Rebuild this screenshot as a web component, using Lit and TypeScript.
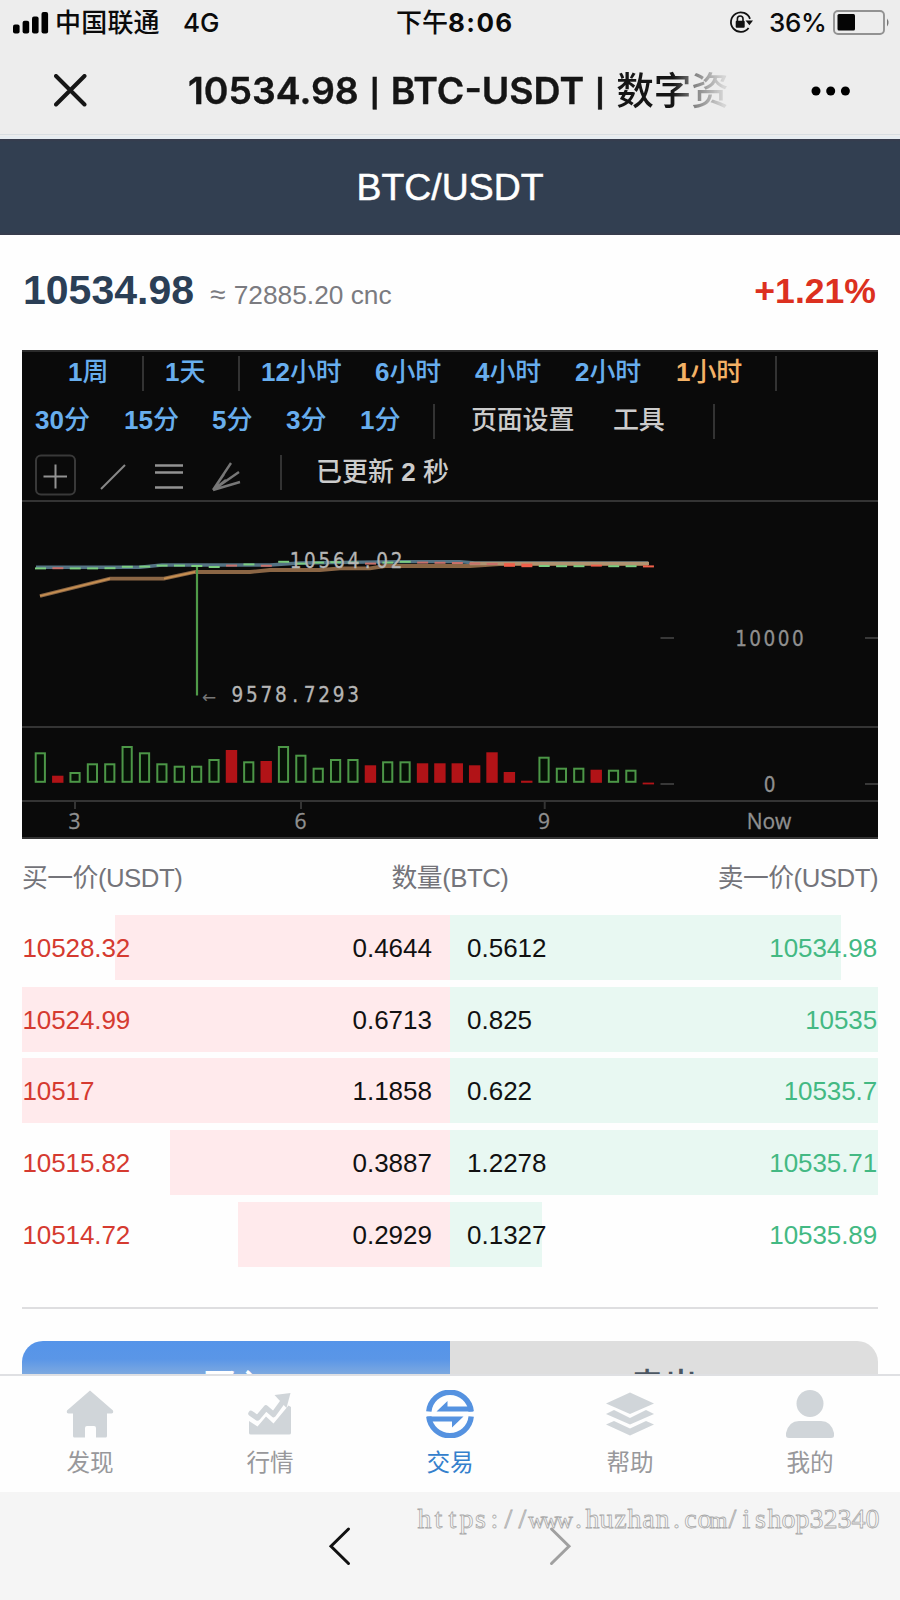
import { LitElement, html, svg, css } from "lit";
import { customElement } from "lit/decorators.js";

const PITCH = 17.37;

// [colour, top edge] of every volume bar; all share one baseline
const VOLUMES: Array<[string, number]> = [
  ["g", 752.3], ["r", 775.7], ["g", 772], ["g", 763.3], ["g", 763.3], ["g", 746], ["g", 752.3], ["g", 763.3],
  ["g", 765.7], ["g", 765.7], ["g", 759], ["r", 750], ["g", 761.3], ["r", 761], ["g", 746], ["g", 754.7],
  ["g", 767.7], ["g", 759], ["g", 759], ["r", 765.3], ["g", 761.3], ["g", 761.3], ["r", 763.3], ["r", 763.3],
  ["r", 763.3], ["r", 765.3], ["r", 752.3], ["r", 772], ["r", 780.7], ["g", 756.7], ["g", 767.7], ["g", 767.7],
  ["r", 769.7], ["g", 769.7], ["g", 769.7], ["r", 782.6],
];

// vertical position of each candle body
const CANDLES = [
  568.4, 568.2, 568.4, 568.4, 568.2, 566.8, 566.6, 565.6, 565.6, 566, 567, 565.6, 564.4, 565.8, 561.8, 563.6,
  562.6, 562.2, 562.6, 563.6, 562.6, 561.8, 562.6, 562.8, 563, 563.6, 564, 565, 565.4, 566, 566.2, 566.2,
  565.6, 566.2, 566.2, 566.4,
];

const BIDS = [
  { price: "10528.32", amount: "0.4644", width: 335 },
  { price: "10524.99", amount: "0.6713", width: 428 },
  { price: "10517", amount: "1.1858", width: 428 },
  { price: "10515.82", amount: "0.3887", width: 280 },
  { price: "10514.72", amount: "0.2929", width: 212 },
];

const ASKS = [
  { price: "10534.98", amount: "0.5612", width: 391 },
  { price: "10535", amount: "0.825", width: 428 },
  { price: "10535.7", amount: "0.622", width: 428 },
  { price: "10535.71", amount: "1.2278", width: 428 },
  { price: "10535.89", amount: "0.1327", width: 92 },
];

const spread = (text: string, start: number, pitch: number) =>
  [...text].map((_, i) => (start + i * pitch).toFixed(1)).join(" ");

@customElement("status-bar")
class StatusBar extends LitElement {
  static styles = css`
    :host { display: grid; grid-template-columns: 13px 42px 128px 213px 332px 41px 64px 1fr; height: 46px; align-items: center; color: #0b0b0b;
      font: 700 26px/46px Inter, "Noto Sans CJK SC", sans-serif; white-space: nowrap; }
    .cn { font-weight: 500; letter-spacing: 0.2px; }
    .net { font-weight: 500; font-size: 26px; }
    .time { letter-spacing: 1.4px; }
    .ampm { font-weight: 500; letter-spacing: 0; }
    .pct { font-weight: 500; letter-spacing: -0.3px; }
    svg { display: block; overflow: visible; }
  `;
  render() {
    return html`
      <span></span>
      <svg width="35" height="22" viewBox="0 0 35 22">
        <rect x="0" y="12.5" width="6.6" height="9" rx="2"/><rect x="9.6" y="8.8" width="6.6" height="12.7" rx="2"/>
        <rect x="19" y="4.6" width="6.6" height="16.9" rx="2"/><rect x="28.5" y="0" width="6.6" height="21.5" rx="2"/>
      </svg>
      <span class="cn">中国联通</span>
      <span class="net">4G</span>
      <span class="time"><span class="ampm">下午</span>8:06</span>
      <svg width="26" height="24" viewBox="0 0 26 24">
        <path d="M20.3 17.6A9.8 9.8 0 1 1 21.700 8.500" transform="translate(0.300 -0.600)" fill="none" stroke="#111" stroke-width="1.8"/>
        <path d="M17.500 9.500h7.500l-3.600 4.800z" fill="#111"/>
        <rect x="7.700" y="9.800" width="9" height="7" rx="1" fill="#111"/>
        <path d="M9.400 10.200V7.800a2.800 2.800 0 0 1 5.600 0V10.200" fill="none" stroke="#111" stroke-width="1.6"/>
      </svg>
      <span class="pct">36%</span>
      <svg width="58" height="24" viewBox="0 0 58 24">
        <rect x="1" y="0" width="50" height="23" rx="4" fill="none" stroke="#929292" stroke-width="1.9"/>
        <rect x="4.500" y="3" width="17.5" height="16.500" rx="1.5" fill="#050505"/>
        <path d="M54 7.500q3 4 0 8z" fill="#777"/>
      </svg>`;
  }
}

@customElement("title-bar")
class TitleBar extends LitElement {
  static styles = css`
    :host { display: grid; grid-template-columns: 54px 134px 548px 75px 1fr; height: 89px; align-items: center;
      box-sizing: border-box; border-bottom: 1px solid #d9dee2; }
    svg { display: block; }
    .x { grid-column: 2; }
    .title { font: 600 37.400px/90px Inter, "Noto Sans CJK SC", sans-serif; color: #151515; white-space: nowrap;
      height: 88px; letter-spacing: 0; -webkit-text-stroke: 0.4px #151515;
      -webkit-mask-image: linear-gradient(90deg, #000 485px, rgba(0,0,0,.5) 506px, rgba(0,0,0,.1) 536px); }
    .bar { display: inline-block; width: 32px; text-align: center; font-size: 27px; line-height: 40px; font-weight: 700; vertical-align: 1px; letter-spacing: 0; }
    .cjk { font-weight: 500; font-size: 37.600px; -webkit-text-stroke: 0; }
    .dots { grid-column: 5; margin-top: 2px; }
  `;
  render() {
    return html`
      <svg class="x" width="33" height="33" viewBox="0 0 33 33"><path d="M2 2L30.5 30.5M30.5 2L2 30.5" stroke="#161616" stroke-width="4" stroke-linecap="round"/></svg>
      <div class="title">10534.98<span class="bar">|</span>BTC-USDT<span class="bar">|</span><span class="cjk">数字资</span></div>
      <svg class="dots" width="40" height="10" viewBox="0 0 40 10"><circle cx="5" cy="5" r="4.5"/><circle cx="19.7" cy="5" r="4.5"/><circle cx="34.4" cy="5" r="4.5"/></svg>`;
  }
}

@customElement("chart-toolbar")
class ChartToolbar extends LitElement {
  static styles = css`
    :host { display: block; height: 152px; border-top: 2px solid #2b2b2b; box-sizing: border-box; border-bottom: 2px solid #343434;
      font: bold 26px/36px "Liberation Sans", "Noto Sans CJK SC", sans-serif; color: #68aeee; }
    .row { display: grid; height: 36px; white-space: nowrap; align-items: center; }
    .row span { position: relative; top: -1px; }
    .row span span { top: 0; }
    .r1 { padding: 3px 0 0 46px; grid-template-columns: 74px 23px 73px 23px 114px 100px 100px 101px 99px 2px; }
    .r2 { padding: 12px 0 0 13px; grid-template-columns: 89px 88px 74px 74px 73px 38px 142px 100px 2px; }
    .r3 { padding: 15px 0 0 13px; grid-template-columns: 64px 55px 57px 69px 36px 1fr; height: 45px; align-items: start; }
    .sep { width: 2px; height: 35px; background: #333; }
    .r3 .sep { margin-top: 1px; }
    .r3 .plain { top: 0; }
    .cur { color: #f4b266; }
    .plain { color: #ccc; }
    .cjk, .plain { font-weight: 500; }
    .n { font-weight: 700; }
    .row .cjk { letter-spacing: -0.2px; }
    svg { display: block; overflow: visible; }
  `;
  render() {
    const item = (n: string, unit: string, cls = "") => html`<span class=${cls}>${n}<span class="cjk">${unit}</span></span>`;
    return html`
      <div class="row r1">${item("1", "周")}<i class="sep"></i>${item("1", "天")}<i class="sep"></i>${item("12", "小时")}${item("6", "小时")}${item("4", "小时")}${item("2", "小时")}${item("1", "小时", "cur")}<i class="sep"></i></div>
      <div class="row r2">${item("30", "分")}${item("15", "分")}${item("5", "分")}${item("3", "分")}${item("1", "分")}<i class="sep"></i><span class="plain cjk">页面设置</span><span class="plain cjk">工具</span><i class="sep"></i></div>
      <div class="row r3">
        <svg width="41" height="42" viewBox="0 0 41 41" fill="none"><rect x="1" y="1" width="39" height="39" rx="5" stroke="#393939" stroke-width="2"/><path d="M8.5 22H32M20.5 10V34" stroke="#929292" stroke-width="2"/></svg>
        <svg width="28" height="43" viewBox="0 0 28 41"><path d="M2 34L26 10" stroke="#888" stroke-width="2"/></svg>
        <svg width="30" height="43" viewBox="0 0 30 41"><path d="M1 10.500H29M1 17.500H29M1 32.500H29" stroke="#929292" stroke-width="2.4"/></svg>
        <svg width="30" height="43" viewBox="0 0 30 41"><path d="M2 35L20 8M2 35L28 17M2 35L29 27M2 35L13 19M2 35L15 25" stroke="#777" stroke-width="2.4"/></svg>
        <i class="sep"></i><span class="plain">已更新 <b class="n">2</b> 秒</span>
      </div>`;
  }
}

@customElement("price-chart")
class PriceChart extends LitElement {
  static styles = css`
    :host { display: block; height: 337px; }
    svg { display: block; }
    .num { font: 20.5px "DejaVu Sans", sans-serif; font-stretch: condensed; fill: #b5b5b5; text-anchor: middle; stroke: #b5b5b5; stroke-width: 0.3; }
    .axis { font: 21px "Open Sans", sans-serif; fill: #909090; text-anchor: middle; stroke: #909090; stroke-width: 0.3; }
    .dim { fill: #8f8f8f; stroke: #8f8f8f; }
    .arrow { font: 17px "DejaVu Sans", sans-serif; fill: #777; }
  `;
  render() {
    return html`<svg width="856" height="337" viewBox="22 502 856 337">
      <g stroke="#343434" stroke-width="2"><path d="M22 727H878M22 801H878M22 838H878M75 802V809M301 802V809M544.7 802V809"/></g>
      <path d="M660.5 638H674M865 638H878M660.5 784H674M865 784H878" stroke="#484848" stroke-width="1.6"/>
      <path d="M36 567.3H140L162 565H270L300 563L400 561.6H460L475 563H648" fill="none" stroke="#547384" stroke-width="3.4"/>
      <path d="M40 596L110 578.6H164L195 572H250L270 570H320L340 568.3H370L385 566H470L500 564H648" fill="none" stroke="#8b6645" stroke-width="3.8"/>
      <path d="M470 563.500H649" stroke="#b09472" stroke-width="3.6"/>
      <path d="M40 596L110 578.6M164 578.6L195 572" stroke="#c78f50" stroke-width="1.8"/>
      <path d="M197 566V695.5" stroke="#4f9a48" stroke-width="2.2"/>
      ${CANDLES.map((y, i) => svg`<path d="M${35 + i * PITCH} ${y}h11" stroke=${VOLUMES[i][0] === "g" ? "#7bcd80" : i > 26 ? "#f0604a" : "#c8706a"} stroke-width=${i === 27 || i === 28 ? 3.6 : 2}/>`)}
      ${VOLUMES.map(([c, top], i) => {
        const x = 34.7 + i * PITCH;
        const h = Math.max(782.8 - top, 1.8);
        return c === "g"
          ? svg`<rect x=${x + 1} y=${top + 1} width="9.2" height=${h - 2} fill="#061006" stroke="#4c9747" stroke-width="2"/>`
          : svg`<rect x=${x} y=${top} width="11.4" height=${h} fill="#b11317"/>`;
      })}
      <text class="num" x=${spread("10564.02", 295.500, 14.45)} y="567.500">10564.02</text>
      <text class="arrow" x="202" y="703">←</text>
      <text class="num" x=${spread("9578.7293", 237.400, 14.45)} y="702.300">9578.7293</text>
      <text class="num dim" x=${spread("10000", 741, 14.2)} y="645.600">10000</text>
      <text class="num dim" x="769.500" y="791.500">0</text>
      <text class="axis" x="74.500" y="829">3</text><text class="axis" x="300.500" y="829">6</text><text class="axis" x="544" y="829">9</text>
      <text class="axis" x="769" y="829">Now</text>
    </svg>`;
  }
}

@customElement("order-book")
class OrderBook extends LitElement {
  static styles = css`
    :host { display: block; font: 26px/66px "Liberation Sans", "Noto Sans CJK SC", sans-serif; }
    .head { display: grid; grid-template-columns: 1fr auto 1fr; height: 76px; line-height: 79px; color: #74747a; font-size: 25.800px; letter-spacing: -0.5px; }
    .r { text-align: right; }
    .rows { display: grid; grid-template-columns: 428px 428px; row-gap: 6.7px; grid-auto-rows: 65px; }
    .cell { display: grid; grid-template: 65px / 100%; }
    .bar { grid-area: 1 / 1; }
    .bid .bar { background: #ffeaec; justify-self: end; }
    .ask .bar { background: #e8f8f2; }
    .txt { grid-area: 1 / 1; display: flex; justify-content: space-between; }
    .bid .txt { padding: 0 18px 0 0.500px; }
    .ask .txt { padding: 0 1px 0 17px; }
    .price { letter-spacing: -0.1px; }
    .bid .price { color: #d53a30; }
    .ask .price { color: #43b983; }
    .amt { color: #111; }
  `;
  render() {
    return html`
      <div class="head"><span>买一价(USDT)</span><span>数量(BTC)</span><span class="r">卖一价(USDT)</span></div>
      <div class="rows">${BIDS.map((b, i) => html`
        <div class="cell bid"><div class="bar" style="width:${b.width}px"></div><div class="txt"><span class="price">${b.price}</span><span class="amt">${b.amount}</span></div></div>
        <div class="cell ask"><div class="bar" style="width:${ASKS[i].width}px"></div><div class="txt"><span class="amt">${ASKS[i].amount}</span><span class="price">${ASKS[i].price}</span></div></div>`)}
      </div>`;
  }
}

@customElement("tab-bar")
class TabBar extends LitElement {
  static styles = css`
    :host { display: grid; grid-template-columns: repeat(5, 180px); height: 118px; background: #fefefe; border-top: 2px solid #dfe0e3;
      box-sizing: border-box; color: #98989b; font: 23.6px/30px "Noto Sans CJK SC", sans-serif; }
    .tab { display: flex; flex-direction: column; align-items: center; padding-top: 14px; gap: 8px; }
    .on { color: #3480cc; }
    svg { display: block; fill: #d0d5d9; }
    .on svg { fill: #5592e0; }
  `;
  render() {
    return html`
      <div class="tab"><svg width="48" height="48" viewBox="0 0 48 48"><path d="M24 0.5L47 20.5Q48 24 44.5 23.5H41V46Q41 47.5 39.5 47.5H30V38Q30 36 28 36H21Q19 36 19 38V47.5H8.500Q7 47.5 7 46V23.500H3.500Q0 24 1 20.500Z"/></svg><span>发现</span></div>
      <div class="tab"><svg width="48" height="48" viewBox="0 0 48 48"><path d="M5 23.500L11.500 28L20 18L27.500 24.500L38 10" fill="none" stroke="#d0d5d9" stroke-width="5.500" stroke-linejoin="round" stroke-linecap="round"/><path d="M28.500 5L44.500 3L40.500 18Z"/><path d="M3 31L11.500 36.500L20 26.500L27.500 33.500L42.500 15.500L45 17V43Q45 44.500 43 44.500H5Q3 44.500 3 43Z"/></svg><span>行情</span></div>
      <div class="tab on"><svg width="48" height="48" viewBox="0 0 48 48"><path d="M2.800 21.500A21.300 21.300 0 0 1 45.200 21.500M2.800 26.500A21.300 21.300 0 0 0 45.200 26.500" fill="none" stroke="#5592e0" stroke-width="5.400"/><path d="M10.500 21.500L21.500 11V16.500H45L47 21.500ZM37.500 26.500L26 37.500V31.500H3L1 26.500Z"/></svg><span>交易</span></div>
      <div class="tab"><svg width="48" height="48" viewBox="0 0 48 48"><path d="M24 2.500L48 13.500L24 24L0 13.500Z"/><path d="M0 24L8 20L24 28L40 20L48 24L24 34.500Z"/><path d="M0 34.500L8 31L24 38.500L40 31L48 34.500L24 45.500Z"/></svg><span>帮助</span></div>
      <div class="tab"><svg width="48" height="48" viewBox="0 0 48 48"><circle cx="24" cy="13.500" r="13.500"/><path d="M0 43Q3 31 13 31H35Q45 31 48 43V45.500Q48 48 45 48H3Q0 48 0 45.500Z"/></svg><span>我的</span></div>`;
  }
}

@customElement("browser-footer")
class BrowserFooter extends LitElement {
  static styles = css`
    :host { display: block; height: 108px; background: #f5f5f5; }
    svg { display: block; }
    .mark { font: 28px "Liberation Serif", serif; fill: #f8f8f8; stroke: #aaa; stroke-width: 0.8; text-anchor: middle; }
    .wide { font-size: 23px; }
  `;
  render() {
    const url = "https://www.huzhan.com/ishop32340";
    const parts: Array<[string, boolean]> = [["https://", false], ["www", true], [".huzhan.co", false], ["m", true], ["/ishop32340", false]];
    return html`<svg width="900" height="108" viewBox="0 1492 900 108">
      <path d="M348.500 1529L331 1546.300L348.500 1563.500" fill="none" stroke="#111" stroke-width="3" stroke-linecap="round"/>
      <path d="M551.500 1529L569 1546.300L551.500 1563.500" fill="none" stroke="#a0a0a0" stroke-width="3" stroke-linecap="round"/>
      <text class="mark" x=${spread(url, 424.5, 14)} y="1527.500">${parts.map(([t, wide]) => svg`<tspan class=${wide ? "wide" : ""}>${t}</tspan>`)}</text>
    </svg>`;
  }
}

@customElement("app-root")
class AppRoot extends LitElement {
  static styles = css`
    :host { display: block; width: 900px; height: 1600px; overflow: hidden; background: #fefefe; font-family: "Liberation Sans", "Noto Sans CJK SC", sans-serif; }
    .top { background: #ededed; height: 139px; box-sizing: border-box; border-bottom: 3px solid #e6ecf1; }
    .pair { height: 96px; background: linear-gradient(#383b4b, #323f51 3px, #323f51 93px, #383b4b); color: #fff; text-align: center;
      font-size: 37.400px; line-height: 96px; -webkit-text-stroke: 0.5px #fff; }
    .quote { height: 115px; padding: 0 24px 0 23px; box-sizing: border-box; display: flex; align-items: baseline; line-height: 111px; }
    .last { font-weight: bold; font-size: 41px; color: #2b3f56; }
    .cnc { font-size: 26.300px; color: #7b7b80; margin-left: 16px; }
    .approx { font-size: 28px; margin-right: 1px; }
    .chg { margin-left: auto; font-weight: bold; font-size: 35.600px; color: #dc3020; position: relative; top: -1px; }
    .main { padding: 0 22px; height: 1024px; overflow: hidden; }
    .chart { background: #0a0a0a; }
    .rule { height: 2px; background: #dedee0; margin: 40px 0 32px; }
    .sides { display: grid; grid-template-columns: 1fr 1fr; height: 90px; font: 500 34px/86px "Noto Sans CJK SC", sans-serif; text-align: center; }
    .buy { border-radius: 21px 0 0 0; color: #fff; background: linear-gradient(#5594e9 0, #5a96e7 18px, #7da9e0 33px); }
    .sell { border-radius: 0 21px 0 0; color: #4b5662; background: #dedede; }
  `;
  render() {
    return html`
      <div class="top"><status-bar></status-bar><title-bar></title-bar></div>
      <div class="pair">BTC/USDT</div>
      <div class="quote"><span class="last">10534.98</span><span class="cnc"><span class="approx">≈</span> 72885.20 cnc</span><span class="chg">+1.21%</span></div>
      <div class="main">
        <div class="chart"><chart-toolbar></chart-toolbar><price-chart></price-chart></div>
        <order-book></order-book>
        <div class="rule"></div>
        <div class="sides"><div class="buy">买入</div><div class="sell">卖出</div></div>
      </div>
      <tab-bar></tab-bar>
      <browser-footer></browser-footer>`;
  }
}
